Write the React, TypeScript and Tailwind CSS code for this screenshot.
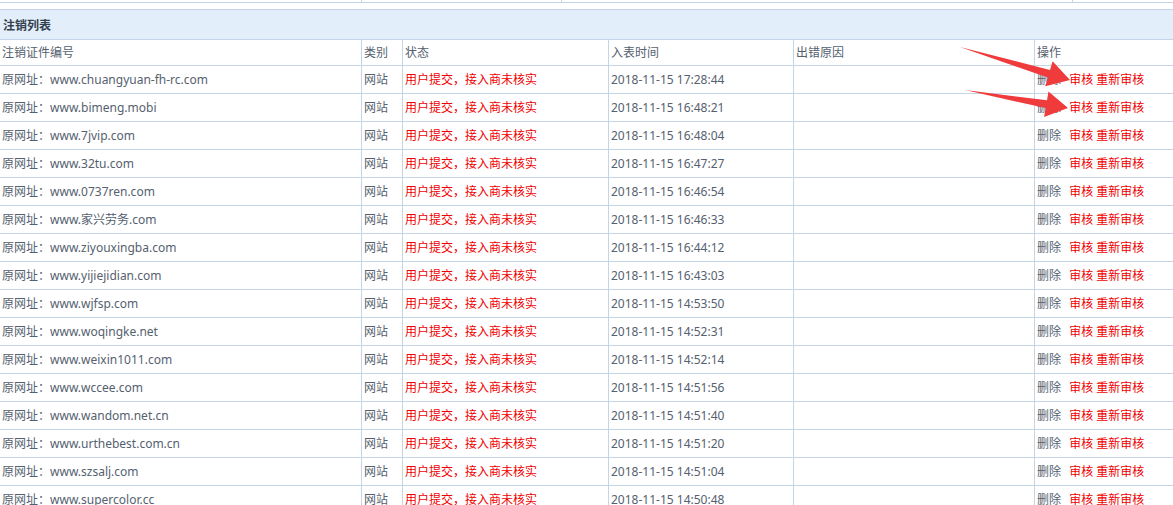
const rows: [string, string][] = [
  ["www.chuangyuan-fh-rc.com", "17:28:44"],
  ["www.bimeng.mobi", "16:48:21"],
  ["www.7jvip.com", "16:48:04"],
  ["www.32tu.com", "16:47:27"],
  ["www.0737ren.com", "16:46:54"],
  ["www.家兴劳务.com", "16:46:33"],
  ["www.ziyouxingba.com", "16:44:12"],
  ["www.yijiejidian.com", "16:43:03"],
  ["www.wjfsp.com", "14:53:50"],
  ["www.woqingke.net", "14:52:31"],
  ["www.weixin1011.com", "14:52:14"],
  ["www.wccee.com", "14:51:56"],
  ["www.wandom.net.cn", "14:51:40"],
  ["www.urthebest.com.cn", "14:51:20"],
  ["www.szsalj.com", "14:51:04"],
  ["www.supercolor.cc", "14:50:48"],
];

const cell = "border border-[#c3d5e6] px-[2px] align-middle whitespace-nowrap overflow-hidden";

export default function App() {
  return (
    <div
      className="relative w-[1173px] h-[505px] overflow-hidden bg-white text-[12px] text-[#55616f]"
      style={{ fontFamily: '"Noto Sans", "Noto Sans CJK SC", sans-serif' }}
    >
      {/* 上一块表格的底边 */}
      <div className="flex h-[3px] border-b border-[#c3d5e6]">
        <div className="w-[362px] border-r border-[#c3d5e6]" />
        <div className="w-[200px] border-r border-[#c3d5e6]" />
        <div className="w-[511px] border-r border-[#c3d5e6]" />
      </div>

      {/* 标题栏 */}
      <div className="mt-[6px] h-[30px] pt-[3px] flex items-center px-[3px] bg-[#e2eef9] border-t border-[#c3d5e6] font-bold text-[#34404e]">
        注销列表
      </div>

      {/* 列表 */}
      <table className="table-fixed border-collapse w-[1175px] -ml-px">
        <colgroup>
          <col className="w-[362px]" />
          <col className="w-[41px]" />
          <col className="w-[206px]" />
          <col className="w-[185px]" />
          <col className="w-[241px]" />
          <col className="w-[140px]" />
        </colgroup>
        <thead>
          <tr className="h-[26px] text-left">
            <th className={`${cell} font-normal`}>注销证件编号</th>
            <th className={`${cell} font-normal`}>类别</th>
            <th className={`${cell} font-normal`}>状态</th>
            <th className={`${cell} font-normal`}>入表时间</th>
            <th className={`${cell} font-normal`}>出错原因</th>
            <th className={`${cell} font-normal`}>操作</th>
          </tr>
        </thead>
        <tbody>
          {rows.map(([url, time]) => (
            <tr key={url} className="h-[28px]">
              <td className={cell}>原网址：{url}</td>
              <td className={cell}>网站</td>
              <td className={`${cell} text-[#f00000]`}>用户提交，接入商未核实</td>
              <td className={cell}>2018-11-15 {time}</td>
              <td className={cell}></td>
              <td className={cell}>
                删除 <span className="ml-[5px] text-[#f00000]">审核</span>{" "}
                <span className="text-[#f00000]">重新审核</span>
              </td>
            </tr>
          ))}
        </tbody>
      </table>

      {/* 截图标注的红色箭头 */}
      <svg className="absolute left-0 top-0 pointer-events-none" width="1173" height="505">
        <polygon
          fill="#ef3b3b"
          points="960,47 1050,69.9 1052.6,61.2 1070,80 1045.2,86.2 1047.8,77.5"
        />
        <polygon
          fill="#ef3b3b"
          points="965,90 1047,100.3 1048.5,91.4 1068,108 1044.1,117 1045.6,108.1"
        />
      </svg>
    </div>
  );
}
